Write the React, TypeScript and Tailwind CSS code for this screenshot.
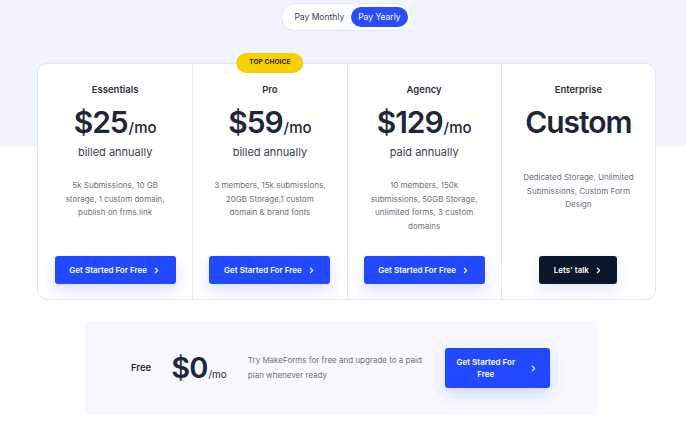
import { ChevronRight } from 'lucide-react';

type Plan = {
  name: string;
  price: string;
  unit?: string;
  note?: string;
  features: string;
  cta: string;
  dark?: boolean;
  badge?: string;
};

const plans: Plan[] = [
  {
    name: 'Essentials',
    price: '$25',
    unit: '/mo',
    note: 'billed annually',
    features: '5k Submissions, 10 GB storage, 1 custom domain, publish on frms.link',
    cta: 'Get Started For Free',
  },
  {
    name: 'Pro',
    price: '$59',
    unit: '/mo',
    note: 'billed annually',
    features: '3 members, 15k submissions, 20GB Storage,1 custom domain & brand fonts',
    cta: 'Get Started For Free',
    badge: 'TOP CHOICE',
  },
  {
    name: 'Agency',
    price: '$129',
    unit: '/mo',
    note: 'paid annually',
    features: '10 members, 150k submissions, 50GB Storage, unlimited forms, 3 custom domains',
    cta: 'Get Started For Free',
  },
  {
    name: 'Enterprise',
    price: 'Custom',
    features: 'Dedicated Storage, Unlimited Submissions, Custom Form Design',
    cta: "Lets' talk",
    dark: true,
  },
];

function PlanColumn({ plan, first }: { plan: Plan; first: boolean }) {
  return (
    <div
      className={`relative flex flex-col items-center px-[10px] pt-[20px] pb-[15px] ${
        first ? '' : 'border-l border-[#e3e7fb]'
      }`}
    >
      {/* Badge sits over the card edge */}
      {plan.badge && (
        <div className="absolute top-[-11px] left-1/2 -translate-x-1/2 h-[20px] px-[13px] rounded-full bg-[#f8cf00] flex items-center text-[6.5px] font-bold tracking-[0.02em] text-[#1f2937] whitespace-nowrap">
          {plan.badge}
        </div>
      )}

      <div className="text-[9.5px] leading-[12px] font-semibold text-[#27303f]">{plan.name}</div>

      <div className="mt-[9px] flex items-baseline text-[#1e2638]">
        <span className="text-[30px] leading-[34px] font-semibold tracking-[-0.035em]">{plan.price}</span>
        {plan.unit && <span className="text-[15px] leading-none font-medium ml-[1px]">{plan.unit}</span>}
      </div>

      {plan.note && (
        <div className="mt-[6px] text-[11px] leading-[14px] text-[#374151]">{plan.note}</div>
      )}

      <p
        className={`${plan.note ? 'mt-[20px]' : 'mt-[32px]'} max-w-[113px] text-center text-[8px] leading-[13.7px] text-[#6b7280]`}
      >
        {plan.features}
      </p>

      <button
        className={`mt-auto h-[28px] rounded-[3px] flex items-center justify-center gap-[5px] text-[8px] font-semibold text-white ${
          plan.dark
            ? 'w-[78px] bg-[#0b172b] shadow-[0_6px_14px_rgba(40,70,200,0.12)]'
            : 'w-[121px] bg-[#2249ff] shadow-[0_6px_14px_rgba(40,70,255,0.18)]'
        }`}
      >
        {plan.cta}
        <ChevronRight size={9} strokeWidth={3} />
      </button>
    </div>
  );
}

export default function App() {
  return (
    <div
      className="w-full h-[427px] bg-[linear-gradient(to_bottom,#f0f4fe_146px,#ffffff_146px)] flex flex-col items-center"
      style={{ fontFamily: 'Inter, "Liberation Sans", sans-serif' }}
    >
      {/* Billing toggle */}
      <div className="mt-[3px] ml-[7px] h-[28px] pl-[12px] pr-[3px] rounded-full bg-white border border-[#e3e7fb] flex items-center gap-[7px]">
        <span className="text-[8.5px] text-[#374151]">Pay Monthly</span>
        <span className="h-[20px] px-[7px] rounded-full bg-[#2a4dff] flex items-center text-[8.5px] text-white">
          Pay Yearly
        </span>
      </div>

      {/* Plans */}
      <div className="mt-[32px] w-[619px] h-[237px] ml-[7px] grid grid-cols-4 bg-white border border-[#dfe4fb] rounded-[10px]">
        {plans.map((p, i) => (
          <PlanColumn key={p.name} plan={p} first={i === 0} />
        ))}
      </div>

      {/* Free tier */}
      <div className="mt-[21px] w-[514px] h-[94px] mr-[4px] rounded-[4px] bg-[#f7f9ff] flex items-center pl-[47px]">
        <span className="text-[9.5px] font-semibold text-[#1f2937]">Free</span>
        <div className="ml-[20px] flex items-baseline text-[#1e2638]">
          <span className="text-[29px] leading-[32px] font-semibold tracking-[-0.03em]">$0</span>
          <span className="text-[10px] ml-[1px]">/mo</span>
        </div>
        <p className="ml-[21px] w-[180px] text-[8px] leading-[15px] text-[#6b7280]">
          Try MakeForms for free and upgrade to a paid plan whenever ready
        </p>
        <button className="ml-[17px] w-[105px] h-[40px] rounded-[3px] bg-[#2249ff] shadow-[0_6px_16px_rgba(40,70,255,0.18)] flex items-center justify-center gap-[14px] text-[8px] leading-[12px] font-semibold text-white">
          <span className="text-center">
            Get Started For
            <br />
            Free
          </span>
          <ChevronRight size={9} strokeWidth={3} />
        </button>
      </div>
    </div>
  );
}
